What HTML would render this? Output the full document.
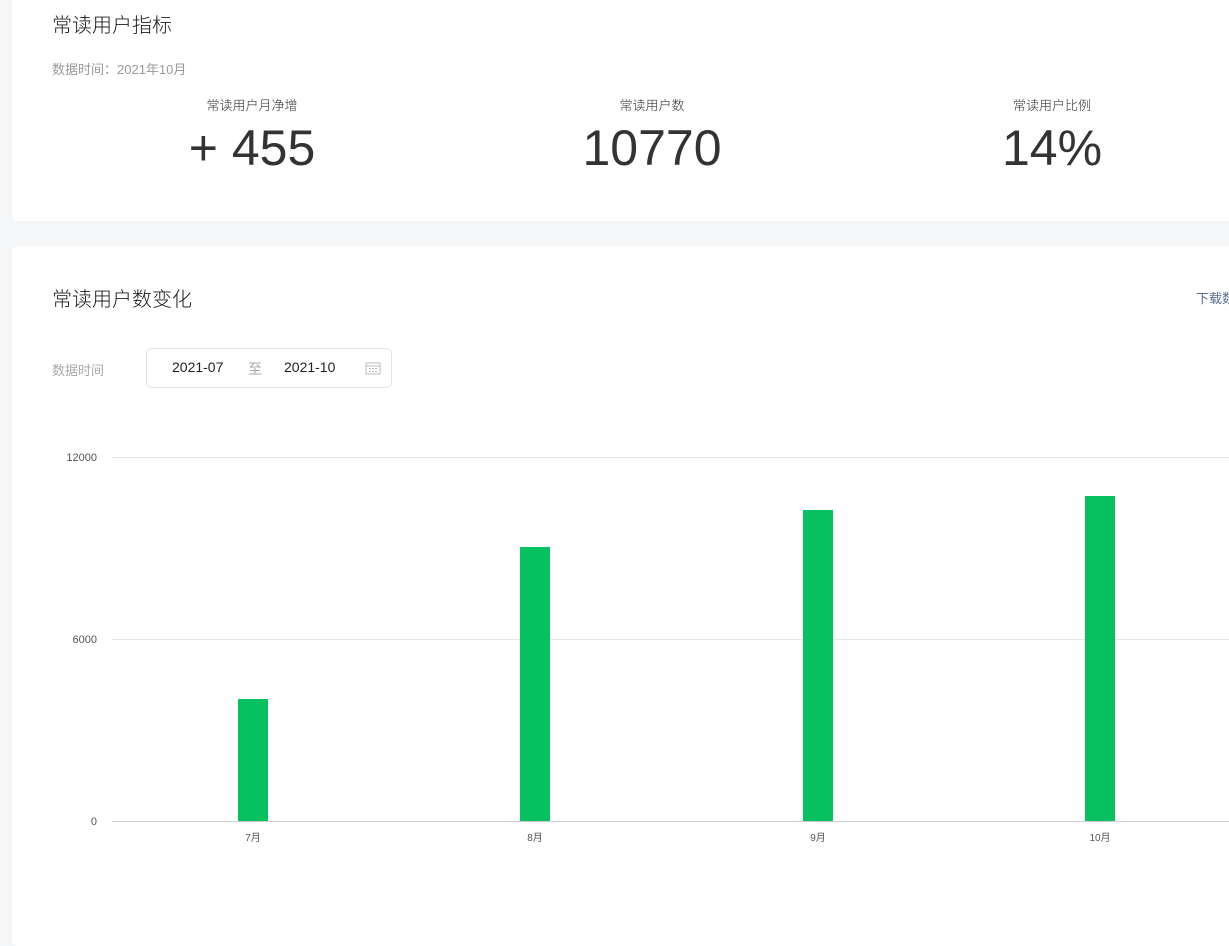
<!DOCTYPE html>
<html><head><meta charset="utf-8"><style>
body{margin:0;width:1229px;height:890px;overflow:hidden;background:#f5f6f8;font-family:"Liberation Sans","Noto Sans CJK SC",sans-serif;position:relative}
.card{position:absolute;left:12px;width:1240px;background:#fff;border-radius:6px}
.a{position:absolute;white-space:nowrap}
.t{font-size:20px;color:#1a1a1a;font-weight:300}
.lab{font-size:13px;color:#333;width:200px;text-align:center;font-weight:300}
.num{font-size:50px;color:#333;width:300px;text-align:center;font-weight:300}
.g{position:absolute;left:112px;width:1117px;height:1px;background:#e6e6e6}
.y{position:absolute;font-size:11px;color:#555;width:60px;text-align:right;left:37px}
.bar{position:absolute;width:30px;background:#07c160;bottom:69px}
.x{position:absolute;font-size:10px;color:#555;width:60px;text-align:center;top:829px}
</style></head><body>
<div class="card" style="top:-10px;height:231px"></div>
<div class="card" style="top:246px;height:700px"></div>
<div class="a t" style="left:52px;top:9px">常读用户指标</div>
<div class="a" style="left:52px;top:59px;font-size:13px;color:#999">数据时间：2021年10月</div>
<div class="a lab" style="left:152px;top:95px">常读用户月净增</div>
<div class="a lab" style="left:552px;top:95px">常读用户数</div>
<div class="a lab" style="left:952px;top:95px">常读用户比例</div>
<div class="a num" style="left:102px;top:119px">+ 455</div>
<div class="a num" style="left:502px;top:119px">10770</div>
<div class="a num" style="left:902px;top:119px">14%</div>
<div class="a t" style="left:52px;top:283px">常读用户数变化</div>
<div class="a" style="left:1196px;top:288px;font-size:13px;color:#576b95">下载数据</div>
<div class="a" style="left:52px;top:360px;font-size:13px;color:#aaa">数据时间</div>
<div class="a" style="left:146px;top:348px;width:244px;height:38px;border:1px solid #e4e4e4;border-radius:6px"></div>
<div class="a" style="left:172px;top:359px;font-size:14px;color:#222">2021-07</div>
<div class="a" style="left:248px;top:359px;font-size:14px;color:#aaa">至</div>
<div class="a" style="left:284px;top:359px;font-size:14px;color:#222">2021-10</div>
<svg class="a" style="left:365px;top:361px" width="16" height="14" viewBox="0 0 16 14"><rect x="1" y="2" width="14" height="11" fill="none" stroke="#bbb"/><line x1="1" y1="5" x2="15" y2="5" stroke="#bbb"/><g fill="#bbb"><rect x="4" y="7" width="2" height="1"/><rect x="7" y="7" width="2" height="1"/><rect x="10" y="7" width="2" height="1"/><rect x="4" y="10" width="2" height="1"/><rect x="7" y="10" width="2" height="1"/><rect x="10" y="10" width="2" height="1"/></g></svg>
<div class="g" style="top:457px"></div><div class="g" style="top:639px"></div><div class="g" style="top:821px;background:#ccc"></div>
<div class="y" style="top:452px">12000</div><div class="y" style="top:634px">6000</div><div class="y" style="top:816px">0</div>
<div class="bar" style="left:238px;top:699px"></div>
<div class="bar" style="left:520px;top:547px"></div>
<div class="bar" style="left:803px;top:510px"></div>
<div class="bar" style="left:1085px;top:496px"></div>
<div class="x" style="left:223px">7月</div><div class="x" style="left:505px">8月</div><div class="x" style="left:788px">9月</div><div class="x" style="left:1070px">10月</div>
</body></html>
